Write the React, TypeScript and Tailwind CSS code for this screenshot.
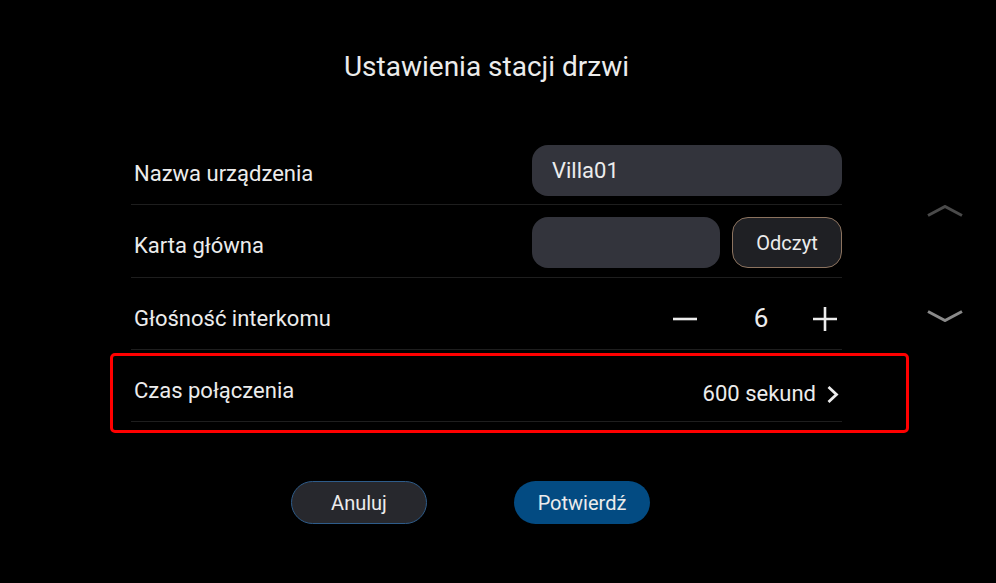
import React from "react";

function ChevronUp({ color }: { color: string }) {
  return (
    <svg width="36" height="12" viewBox="0 0 36 12" fill="none">
      <path d="M1 10.5 L18 1.5 L35 10.5" stroke={color} strokeWidth="3" />
    </svg>
  );
}
function ChevronDown({ color }: { color: string }) {
  return (
    <svg width="36" height="12" viewBox="0 0 36 12" fill="none">
      <path d="M1 1.5 L18 10.5 L35 1.5" stroke={color} strokeWidth="3" />
    </svg>
  );
}

export default function App() {
  return (
    <div
      className="w-[996px] h-[583px] bg-black text-[#ececec] overflow-hidden"
      style={{ fontFamily: "Roboto, 'Noto Sans', sans-serif" }}
    >
      <div className="flex pl-[131px]">
        <div className="w-[711px] flex flex-col">
          <div className="pt-[50px] h-[133px] text-center text-[28px] leading-[34px]">
            Ustawienia stacji drzwi
          </div>

          {/* Row 1 */}
          <div className="h-[72px] flex items-center justify-between border-b border-[#1e1e1e] pt-[3px]">
            <div className="pl-[3px] pt-[6px] text-[22px]">Nazwa urządzenia</div>
            <div className="w-[310px] h-[51px] rounded-[16px] bg-[#33343c] flex items-center pl-[20px] text-[22px]">
              Villa01
            </div>
          </div>

          {/* Row 2 */}
          <div className="h-[73px] flex items-center justify-between border-b border-[#1e1e1e] pt-[3px]">
            <div className="pl-[3px] pt-[6px] text-[22px]">Karta główna</div>
            <div className="flex items-center gap-[12px]">
              <div className="w-[188px] h-[51px] rounded-[16px] bg-[#33343c]" />
              <div className="w-[110px] h-[51px] rounded-[16px] bg-[#1f2024] border border-[#8c735f] flex items-center justify-center text-[20px]">
                Odczyt
              </div>
            </div>
          </div>

          {/* Row 3 */}
          <div className="h-[72px] flex items-center justify-between border-b border-[#1e1e1e] pt-[10px]">
            <div className="pl-[3px] text-[22px]">Głośność interkomu</div>
            <div className="flex items-center pr-[4px]">
              <svg width="26" height="26" viewBox="0 0 26 26" className="mr-[50px]">
                <path d="M1 13 H25" stroke="#ececec" strokeWidth="2.6" />
              </svg>
              <div className="w-[26px] text-center text-[26px]">6</div>
              <svg width="26" height="26" viewBox="0 0 26 26" className="ml-[38px]">
                <path d="M1 13 H25 M13 1 V25" stroke="#ececec" strokeWidth="2.6" />
              </svg>
            </div>
          </div>

          {/* Row 4 */}
          <div className="relative h-[72px] flex items-center justify-between border-b border-[#1e1e1e] pt-[10px]">
            <div className="pl-[3px] text-[22px]">Czas połączenia</div>
            <div className="flex items-center pr-[3px] pt-[6px] text-[22px]">
              <span>600 sekund</span>
              <svg width="13" height="19" viewBox="0 0 13 19" className="ml-[10px] mt-[2px]">
                <path d="M2.5 2 L10.5 9.5 L2.5 17" stroke="#ececec" strokeWidth="2.8" fill="none" />
              </svg>
            </div>
            <div className="absolute left-[-21px] right-[-67px] top-[3px] bottom-[-12px] border-[3px] border-[#ff0000] rounded-[5px]" />
          </div>

          <div className="flex pt-[59px] pl-[160px] gap-[87px]">
            <div className="w-[136px] h-[43px] rounded-full bg-[#27282d] border border-[#2e5c8a] flex items-center justify-center text-[20px]">
              Anuluj
            </div>
            <div className="w-[136px] h-[43px] rounded-full bg-[#034b82] flex items-center justify-center text-[20px]">
              Potwierdź
            </div>
          </div>
        </div>

        <div className="ml-[85px] flex flex-col pt-[205px]">
          <ChevronUp color="#4a4a4a" />
          <div className="h-[93px]" />
          <ChevronDown color="#8a8a8a" />
        </div>
      </div>
    </div>
  );
}
